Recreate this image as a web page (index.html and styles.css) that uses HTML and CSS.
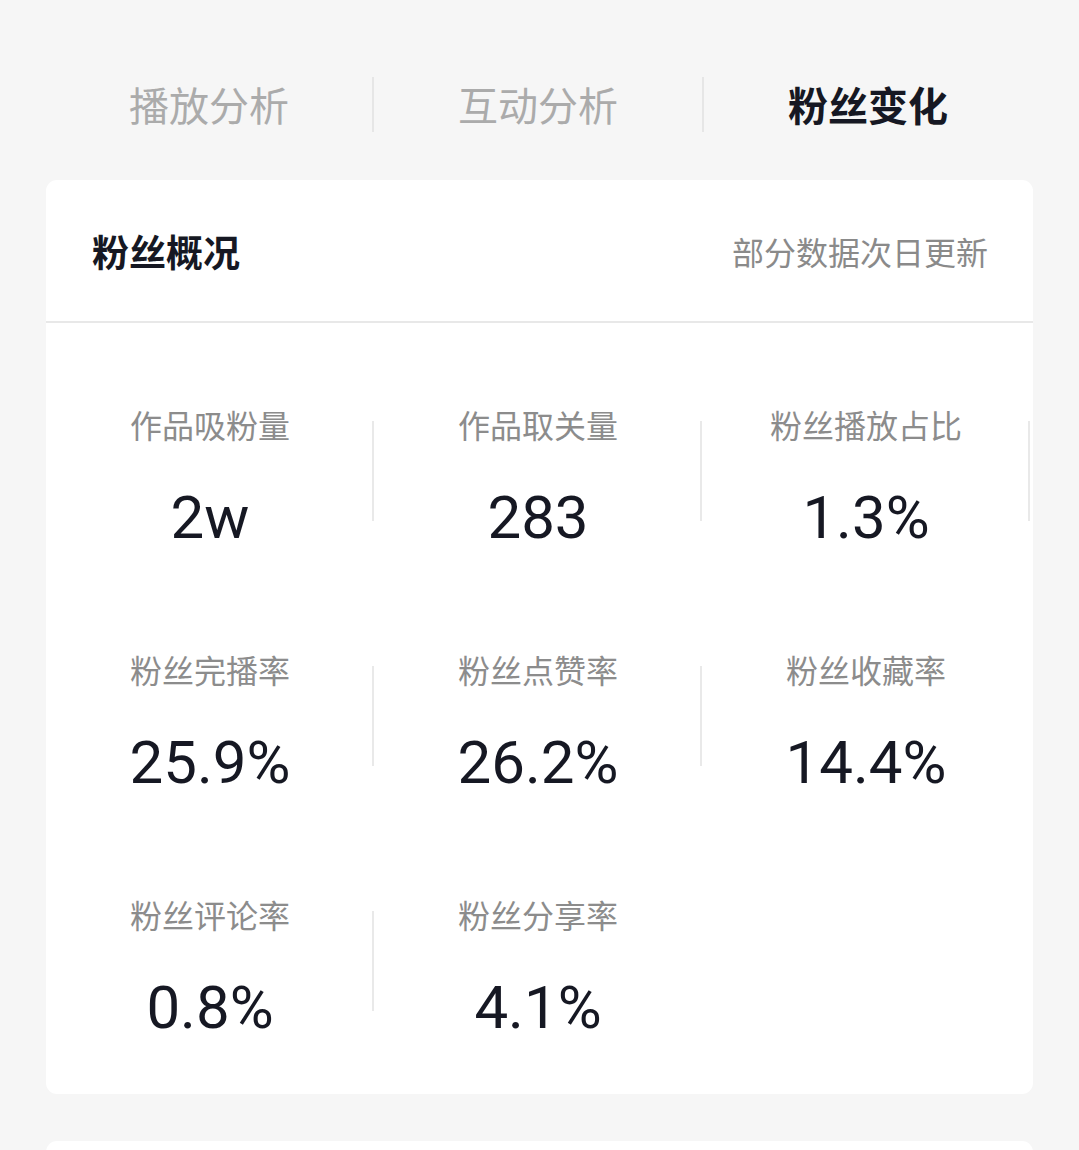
FILE: index.html
```html
<!DOCTYPE html>
<html lang="zh-CN">
<head>
<meta charset="utf-8">
<title>粉丝变化</title>
<link rel="stylesheet" href="styles.css">
</head>
<body>
<div class="page">
  <nav class="tabs">
    <div class="tab">播放分析</div>
    <div class="tab">互动分析</div>
    <div class="tab tab-active">粉丝变化</div>
  </nav>

  <section class="card">
    <header class="card-head">
      <h2 class="card-title">粉丝概况</h2>
      <span class="card-note">部分数据次日更新</span>
    </header>
    <div class="metrics">
      <div class="metric"><div class="metric-label">作品吸粉量</div><div class="metric-value">2w</div></div>
      <div class="metric"><div class="metric-label">作品取关量</div><div class="metric-value">283</div></div>
      <div class="metric"><div class="metric-label">粉丝播放占比</div><div class="metric-value">1.3%</div></div>
      <div class="metric"><div class="metric-label">粉丝完播率</div><div class="metric-value">25.9%</div></div>
      <div class="metric"><div class="metric-label">粉丝点赞率</div><div class="metric-value">26.2%</div></div>
      <div class="metric metric-last"><div class="metric-label">粉丝收藏率</div><div class="metric-value">14.4%</div></div>
      <div class="metric"><div class="metric-label">粉丝评论率</div><div class="metric-value">0.8%</div></div>
      <div class="metric metric-last"><div class="metric-label">粉丝分享率</div><div class="metric-value">4.1%</div></div>
    </div>
  </section>

  <section class="card card-next"></section>
</div>
</body>
</html>
```

FILE: styles.css
```css
html, body {
  margin: 0;
  padding: 0;
  background: #f6f6f6;
}
body {
  font-family: "Noto Sans CJK SC", "Noto Sans", sans-serif;
  color: #161823;
}
.page {
  padding: 77px 46px 0 46px;
  height: 1150px;
  box-sizing: border-box;
  overflow: hidden;
}
.tabs {
  display: grid;
  grid-template-columns: 328px 330px 328px;
  height: 55px;
}
.tab {
  font-size: 40px;
  line-height: 55px;
  text-align: center;
  color: #ababab;
  border-right: 2px solid #e6e6e6;
}
.tab:last-child {
  border-right: none;
}
.tab-active {
  color: #161823;
  font-weight: 700;
}
.card {
  margin-top: 48px;
  background: #ffffff;
  border-radius: 11px;
}
.card-head {
  display: flex;
  align-items: center;
  justify-content: space-between;
  height: 141px;
  padding: 0 45px 0 46px;
  border-bottom: 2px solid #e8e8e8;
}
.card-title {
  margin: 0;
  font-size: 37px;
  font-weight: 700;
  color: #161823;
}
.card-note {
  font-size: 32px;
  color: #8a8a8a;
}
.metrics {
  display: grid;
  grid-template-columns: repeat(3, 328px);
  padding: 32px 0 4px 0;
}
.metric {
  display: flex;
  flex-direction: column;
  align-items: center;
  height: 245px;
  padding-top: 47px;
  box-sizing: border-box;
  background: linear-gradient(#e9e9e9, #e9e9e9) no-repeat right 0 top 66px / 2px 100px;
}
.metric-label {
  font-size: 32px;
  line-height: 45px;
  color: #8c8c8c;
}
.metric-value {
  margin-top: 35px;
  font-family: Roboto, "Noto Sans", sans-serif;
  font-size: 60px;
  line-height: 72px;
  font-weight: 400;
  color: #161823;
}
.metric-last {
  background: none;
}
.metrics .metric:nth-child(3) {
  background: linear-gradient(#e9e9e9, #e9e9e9) no-repeat right 0 top 66px / 2px 100px;
}
.card-next {
  margin-top: 47px;
  height: 40px;
}
```
